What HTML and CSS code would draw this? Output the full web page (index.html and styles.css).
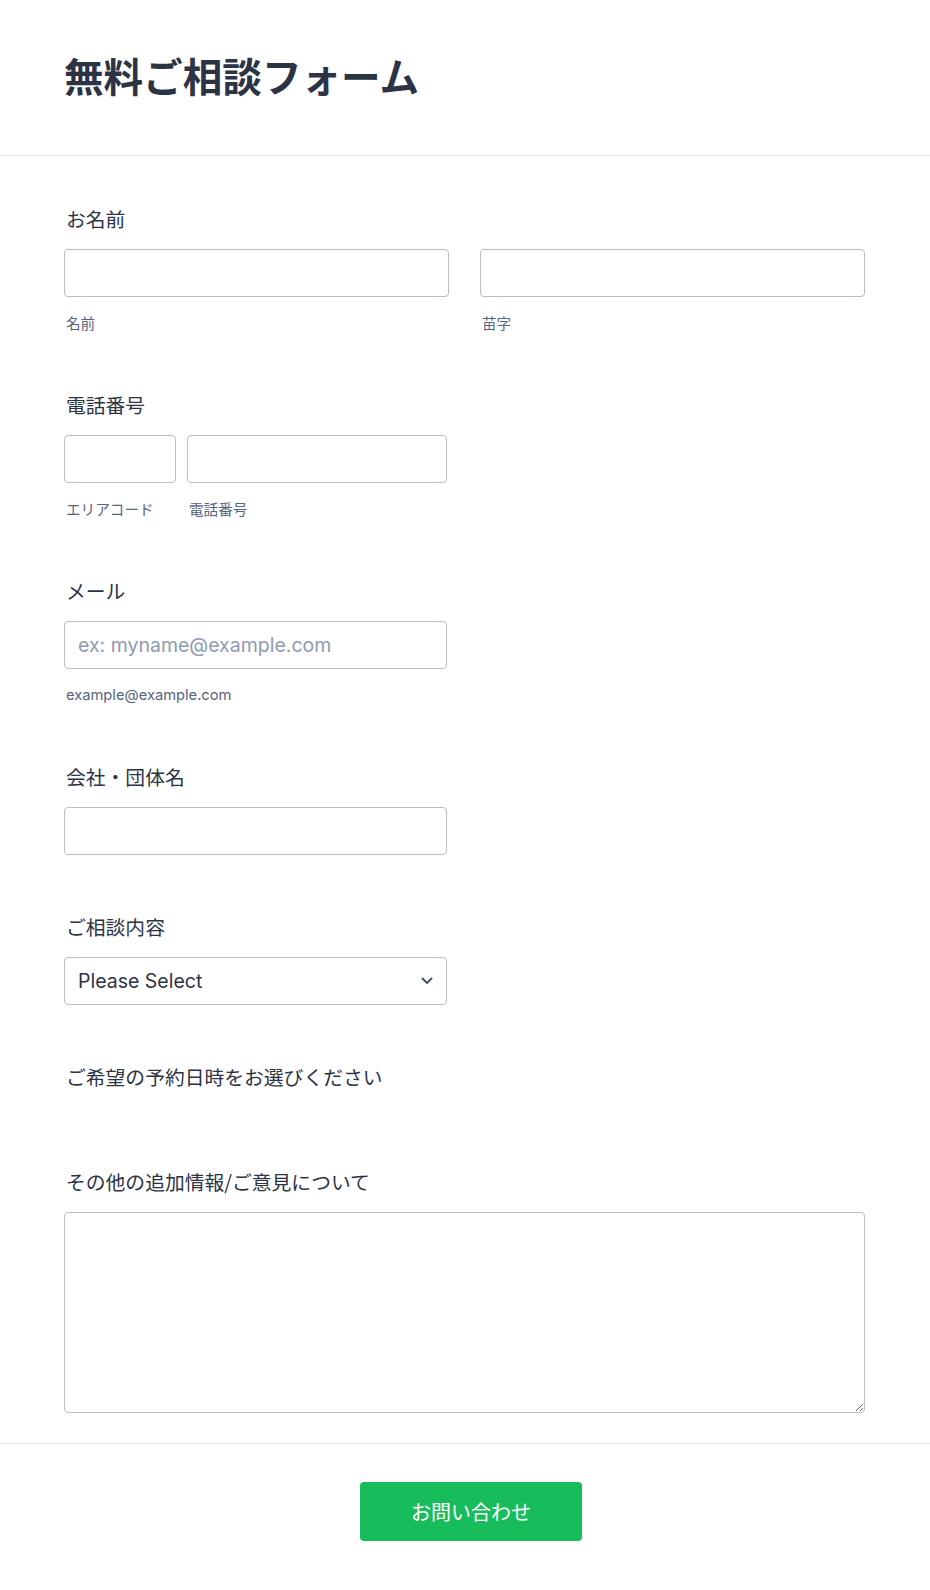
FILE: index.html
```html
<!DOCTYPE html>
<html lang="ja">
<head>
<meta charset="utf-8">
<title>無料ご相談フォーム</title>
<link rel="stylesheet" href="styles.css">
</head>
<body>
<div class="page">
  <header class="header">
    <h1 class="title">無料ご相談フォーム</h1>
  </header>
  <form class="form">
    <div class="field">
      <label class="label">お名前</label>
      <div class="row two">
        <div class="sub-wrap">
          <input class="input" type="text">
          <span class="sublabel">名前</span>
        </div>
        <div class="sub-wrap">
          <input class="input" type="text">
          <span class="sublabel">苗字</span>
        </div>
      </div>
    </div>

    <div class="field">
      <label class="label">電話番号</label>
      <div class="row phone">
        <div class="sub-wrap area">
          <input class="input" type="text">
          <span class="sublabel">エリアコード</span>
        </div>
        <div class="sub-wrap number">
          <input class="input" type="text">
          <span class="sublabel">電話番号</span>
        </div>
      </div>
    </div>

    <div class="field">
      <label class="label">メール</label>
      <div class="sub-wrap half">
        <input class="input" type="email" placeholder="ex: myname@example.com">
        <span class="sublabel latin">example@example.com</span>
      </div>
    </div>

    <div class="field">
      <label class="label">会社・団体名</label>
      <input class="input half" type="text">
    </div>

    <div class="field">
      <label class="label">ご相談内容</label>
      <div class="select half">
        <span class="select-text">Please Select</span>
        <svg class="chevron" width="12" height="8" viewBox="0 0 12 8"><path d="M1.5 1.5 L6 6 L10.5 1.5" fill="none" stroke="#4b5568" stroke-width="2" stroke-linecap="round" stroke-linejoin="round"/></svg>
      </div>
    </div>

    <div class="field appointment">
      <label class="label">ご希望の予約日時をお選びください</label>
    </div>

    <div class="field">
      <label class="label">その他の追加情報/ご意見について</label>
      <textarea class="textarea"></textarea>
    </div>
  </form>
  <footer class="footer">
    <button class="submit" type="button">お問い合わせ</button>
  </footer>
</div>
</body>
</html>
```

FILE: styles.css
```css
* { box-sizing: border-box; }

html, body {
  margin: 0;
  padding: 0;
  background: #ffffff;
}

body {
  font-family: "Inter", "Noto Sans CJK JP", sans-serif;
  color: #2c3345;
}

.page {
  width: 930px;
}

.header {
  padding: 51px 64px 57px;
  border-bottom: 1px solid #e3e3ea;
}

.title {
  margin: 0;
  font-family: "Noto Sans CJK JP", sans-serif;
  font-size: 39.6px;
  line-height: 47px;
  font-weight: 700;
  color: #2c3345;
}

.form {
  padding: 51px 65px 30px 64px;
  display: flex;
  flex-direction: column;
  gap: 60px;
}

.field {
  display: flex;
  flex-direction: column;
}

.field.appointment {
  padding-bottom: 3px;
}

.label {
  font-family: "Noto Sans CJK JP", sans-serif;
  font-size: 19.8px;
  line-height: 24px;
  padding-left: 2px;
  margin-bottom: 18px;
  color: #2c3345;
}

.row {
  display: flex;
}

.row.two {
  gap: 31px;
}

.row.two .sub-wrap {
  width: 385px;
}

.row.phone {
  gap: 11px;
}

.sub-wrap {
  display: flex;
  flex-direction: column;
}

.sub-wrap.area { width: 112px; }
.sub-wrap.number { width: 260px; }

.half { width: 383px; }

.input {
  width: 100%;
  height: 48px;
  border: 1px solid #b8bdc9;
  border-radius: 4px;
  padding: 0 13px;
  font-family: "Inter", "Noto Sans CJK JP", sans-serif;
  font-size: 19.5px;
  color: #2c3345;
  background: #fff;
  outline: none;
}

.input.half { width: 383px; }

.input::placeholder {
  color: #8f9bb0;
}

.sublabel {
  margin-top: 16px;
  font-family: "Noto Sans CJK JP", sans-serif;
  font-size: 14.6px;
  line-height: 20px;
  padding-left: 2px;
  color: #57647e;
  white-space: nowrap;
}

.sublabel.latin {
  font-family: "Inter", sans-serif;
  font-size: 14.7px;
}

.select {
  height: 48px;
  border: 1px solid #b8bdc9;
  border-radius: 4px;
  padding: 0 13px 0 13px;
  display: flex;
  align-items: center;
  justify-content: space-between;
}

.select-text {
  font-family: "Inter", sans-serif;
  font-size: 19.5px;
  color: #2c3345;
}

.chevron {
  display: block;
}

.textarea {
  width: 801px;
  height: 201px;
  border: 1px solid #b8bdc9;
  border-radius: 4px;
  padding: 10px 13px;
  font-family: "Inter", sans-serif;
  font-size: 18px;
  resize: vertical;
  outline: none;
  display: block;
}

.footer {
  border-top: 1px solid #e8e8ee;
  padding: 38px 0 48px 12px;
  display: flex;
  justify-content: center;
}

.submit {
  width: 222px;
  height: 59px;
  border: none;
  border-radius: 4px;
  background: #18bd5b;
  color: #ffffff;
  font-family: "Noto Sans CJK JP", sans-serif;
  font-size: 20px;
  cursor: pointer;
}
```
